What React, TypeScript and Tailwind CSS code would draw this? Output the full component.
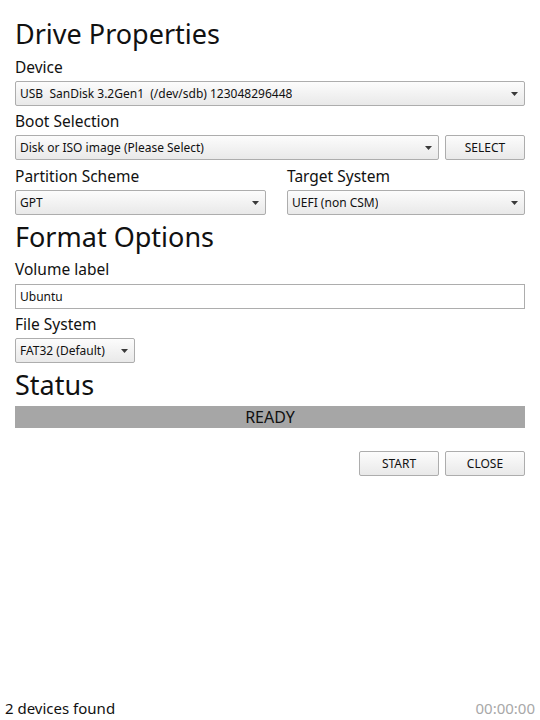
import React from 'react';

const font = { fontFamily: '"Noto Sans", "Open Sans", sans-serif' };

const Arrow = () => (
  <svg width="7" height="4" viewBox="0 0 7 4" className="shrink-0">
    <path d="M0 0 L7 0 L3.5 4 Z" fill="#3a3a3a" />
  </svg>
);

const Combo: React.FC<{ value: string; className?: string }> = ({ value, className = '' }) => (
  <div
    className={`h-[25px] flex items-center justify-between pl-[4px] pr-[6px] border border-[#adadad] rounded-[2px] bg-gradient-to-b from-[#fcfcfc] to-[#e9e9e9] text-[12px] text-[#111] ${className}`}
  >
    <span className="whitespace-pre truncate">{value}</span>
    <Arrow />
  </div>
);

const Btn: React.FC<{ label: string; className?: string }> = ({ label, className = '' }) => (
  <button
    className={`h-[25px] flex items-center justify-center border border-[#adadad] rounded-[2px] bg-gradient-to-b from-[#fcfcfc] to-[#e9e9e9] text-[12px] text-[#111] ${className}`}
  >
    {label}
  </button>
);

const Heading: React.FC<{ children: React.ReactNode; className?: string }> = ({ children, className = '' }) => (
  <h1 className={`text-[27px] leading-[36px] pt-[4px] text-[#111] ${className}`}>{children}</h1>
);

const Label: React.FC<{ children: React.ReactNode }> = ({ children }) => (
  <div className="text-[15.5px] leading-[24px] text-[#111] mt-[3px] mb-[2px]">{children}</div>
);

export default function App() {
  return (
    <div className="w-[540px] h-[720px] bg-white flex flex-col" style={font}>
      <main className="flex-1 px-[15px] pt-[12px]">
        <Heading>Drive Properties</Heading>
        <Label>Device</Label>
        <Combo value="USB  SanDisk 3.2Gen1  (/dev/sdb) 123048296448" />

        <Label>Boot Selection</Label>
        <div className="flex gap-[6px]">
          <Combo value="Disk or ISO image (Please Select)" className="flex-1" />
          <Btn label="SELECT" className="w-[80px]" />
        </div>

        <div className="flex gap-[21px] mt-[1px]">
          <div className="w-[251px]">
            <Label>Partition Scheme</Label>
            <Combo value="GPT" />
          </div>
          <div className="flex-1">
            <Label>Target System</Label>
            <Combo value="UEFI (non CSM)" />
          </div>
        </div>

        <Heading className="-mb-[1px]">Format Options</Heading>
        <Label>Volume label</Label>
        <input
          readOnly
          value="Ubuntu"
          className="w-full h-[25px] px-[4px] border border-[#adadad] text-[12px] text-[#111] outline-none"
          style={font}
        />

        <Label>File System</Label>
        <Combo value="FAT32 (Default)" className="w-[120px]" />

        <Heading>Status</Heading>
        <div className="mt-[3px] h-[22px] bg-[#a6a6a6] flex items-center justify-center text-[16px] text-[#111]">
          READY
        </div>

        <div className="flex justify-end gap-[6px] mt-[23px]">
          <Btn label="START" className="w-[80px]" />
          <Btn label="CLOSE" className="w-[80px]" />
        </div>
      </main>

      <footer className="flex items-end justify-between px-[5px] pb-[1px] text-[15px] leading-[22px]">
        <span className="text-[#111]">2 devices found</span>
        <span className="text-[#a8a8a8]">00:00:00</span>
      </footer>
    </div>
  );
}
